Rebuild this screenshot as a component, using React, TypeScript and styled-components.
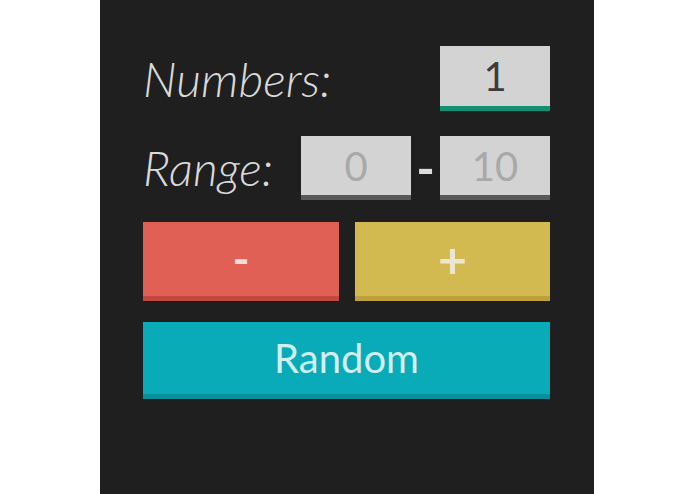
import React from "react";
import styled, { createGlobalStyle } from "styled-components";

const Global = createGlobalStyle`
  html, body { margin: 0; padding: 0; background: #ffffff; height: 100%; }
  #root { height: 100%; }
  * { box-sizing: border-box; }
`;

const Page = styled.div`
  height: 494px;
  display: flex;
  padding-left: 100px;
  background: #ffffff;
`;

const Panel = styled.div`
  width: 494px;
  height: 100%;
  background: #1f1f1f;
  padding: 46px 44px 0 43px;
  display: flex;
  flex-direction: column;
  font-family: Lato, "Open Sans", sans-serif;
`;

const Row = styled.div<{ $gap: number }>`
  display: flex;
  align-items: center;
  margin-bottom: ${(p) => p.$gap}px;
`;

const Label = styled.span`
  font-family: Lato, sans-serif;
  font-style: italic;
  font-weight: 300;
  font-size: 48px;
  color: #d9d9d9;
  margin-right: auto;
  line-height: 1;
`;

const Field = styled.input<{ $accent: string; $h: number }>`
  width: 110px;
  height: ${(p) => p.$h}px;
  border: none;
  border-bottom: 5px solid ${(p) => p.$accent};
  border-radius: 0;
  background: #d3d3d3;
  font-family: Lato, sans-serif;
  font-size: 40px;
  font-weight: 400;
  color: #3c3c3c;
  text-align: center;
  padding: 0;
  outline: none;
  &::placeholder { color: #a9a9a9; }
`;

const Dash = styled.span`
  width: 29px;
  display: flex;
  justify-content: center;
  font-family: Lato, sans-serif;
  font-weight: 700;
  font-size: 50px;
  color: #dcdcdc;
  line-height: 1;
`;

const ButtonRow = styled.div`
  display: grid;
  grid-template-columns: 196px 195px;
  justify-content: space-between;
  margin-bottom: 21px;
`;

const Btn = styled.button<{ $bg: string; $edge: string; $fg: string; $size: number; $weight: number }>`
  height: 79px;
  border: none;
  border-radius: 0;
  border-bottom: 5px solid ${(p) => p.$edge};
  background: ${(p) => p.$bg};
  color: ${(p) => p.$fg};
  font-family: Lato, sans-serif;
  font-size: ${(p) => p.$size}px;
  font-weight: ${(p) => p.$weight};
  padding: 0;
  cursor: pointer;
  line-height: 1;
`;

const Wide = styled(Btn)`
  width: 100%;
  height: 77px;
`;

export default function App() {
  return (
    <>
      <Global />
      <Page>
        <Panel>
          <Row $gap={25}>
            <Label>Numbers:</Label>
            <Field $accent="#109272" $h={65} defaultValue="1" />
          </Row>
          <Row $gap={22}>
            <Label>Range:</Label>
            <Field $accent="#595959" $h={64} placeholder="0" />
            <Dash>-</Dash>
            <Field $accent="#595959" $h={64} placeholder="10" />
          </Row>
          <ButtonRow>
            <Btn $bg="#e06056" $edge="#c4483f" $fg="#f0dcd8" $size={46} $weight={700}>-</Btn>
            <Btn $bg="#d3ba50" $edge="#bea13d" $fg="#ece6cf" $size={50} $weight={700}>+</Btn>
          </ButtonRow>
          <Wide $bg="#0aabb9" $edge="#0a8f9a" $fg="#d2eff0" $size={40} $weight={400}>Random</Wide>
        </Panel>
      </Page>
    </>
  );
}
